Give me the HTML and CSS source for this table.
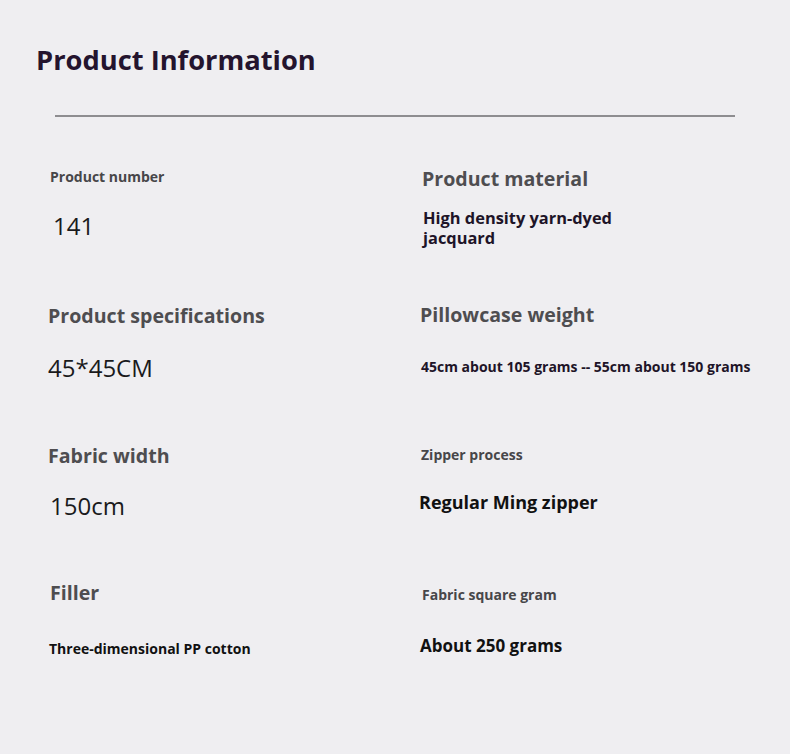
FILE: index.html
```html
<!DOCTYPE html>
<html lang="en">
<head>
    <meta charset="UTF-8">
    <meta name="viewport" content="width=device-width, initial-scale=1.0">
    <title>Product Information</title>
    <link rel="stylesheet" href="styles.css">
</head>
<body>
    <h1 class="title">Product Information</h1>
    <hr class="rule">

    <div class="specs">
        <div class="cell r1-left">
            <div class="label small">Product number</div>
            <div class="value plain">141</div>
        </div>
        <div class="cell r1-right">
            <div class="label">Product material</div>
            <div class="value purple">High density yarn-dyed<br>jacquard</div>
        </div>

        <div class="cell r2-left">
            <div class="label">Product specifications</div>
            <div class="value plain">45*45CM</div>
        </div>
        <div class="cell r2-right">
            <div class="label">Pillowcase weight</div>
            <div class="value purple tiny">45cm about 105 grams -- 55cm about 150 grams</div>
        </div>

        <div class="cell r3-left">
            <div class="label">Fabric width</div>
            <div class="value plain">150cm</div>
        </div>
        <div class="cell r3-right">
            <div class="label small">Zipper process</div>
            <div class="value bold">Regular Ming zipper</div>
        </div>

        <div class="cell r4-left">
            <div class="label">Filler</div>
            <div class="value bold tiny">Three-dimensional PP cotton</div>
        </div>
        <div class="cell r4-right">
            <div class="label small">Fabric square gram</div>
            <div class="value bold short">About 250 grams</div>
        </div>
    </div>
</body>
</html>
```

FILE: styles.css
```css
body {
    margin: 0;
    background-color: #efeef1;
    font-family: "Open Sans", "Noto Sans", Arial, sans-serif;
}
.title {
    margin: 41px 0 0 36px;
    font-size: 27.3px;
    line-height: 38px;
    font-weight: 700;
    color: #24142e;
}
.rule {
    margin: 36px 0 0 55px;
    width: 680px;
    height: 2px;
    border: 0;
    background-color: #8e8d90;
}
.specs {
    display: grid;
    grid-template-columns: 372px 1fr;
    grid-template-rows: repeat(4, 138px);
    margin: 46px 0 0 48px;
}
.label {
    font-size: 19.6px;
    line-height: 28px;
    font-weight: 700;
    color: #4e4d50;
}
.label.small {
    font-size: 14px;
    line-height: 20px;
    color: #474649;
}
.value.plain {
    font-size: 24px;
    line-height: 32px;
    font-weight: 400;
    color: #1a1a1c;
}
.value.purple {
    font-size: 16.4px;
    line-height: 20px;
    font-weight: 700;
    color: #1e1428;
}
.value.bold {
    font-size: 18px;
    line-height: 24px;
    font-weight: 700;
    color: #111;
}
.value.tiny {
    font-size: 14px;
    line-height: 20px;
}
.value.short {
    font-size: 17px;
}

/* per-cell offsets */
.r1-left { padding: 4px 0 0 2px; }
.r1-left .value { margin: 23px 0 0 3px; }
.r1-right { padding: 2px 0 0 2px; }
.r1-right .value { margin: 15px 0 0 1px; }
.r2-left { padding-top: 1px; }
.r2-left .value { margin-top: 22px; }
.r2-right .value { margin: 28px 0 0 1px; }
.r3-left { padding-top: 3px; }
.r3-left .value { margin: 20px 0 0 2px; }
.r3-right { padding: 6px 0 0 1px; }
.r3-right .value { margin: 25px 0 0 -2px; }
.r4-left { padding: 2px 0 0 2px; }
.r4-left .value { margin: 32px 0 0 -1px; }
.r4-right { padding: 8px 0 0 2px; }
.r4-right .value { margin: 29px 0 0 -2px; }
```
